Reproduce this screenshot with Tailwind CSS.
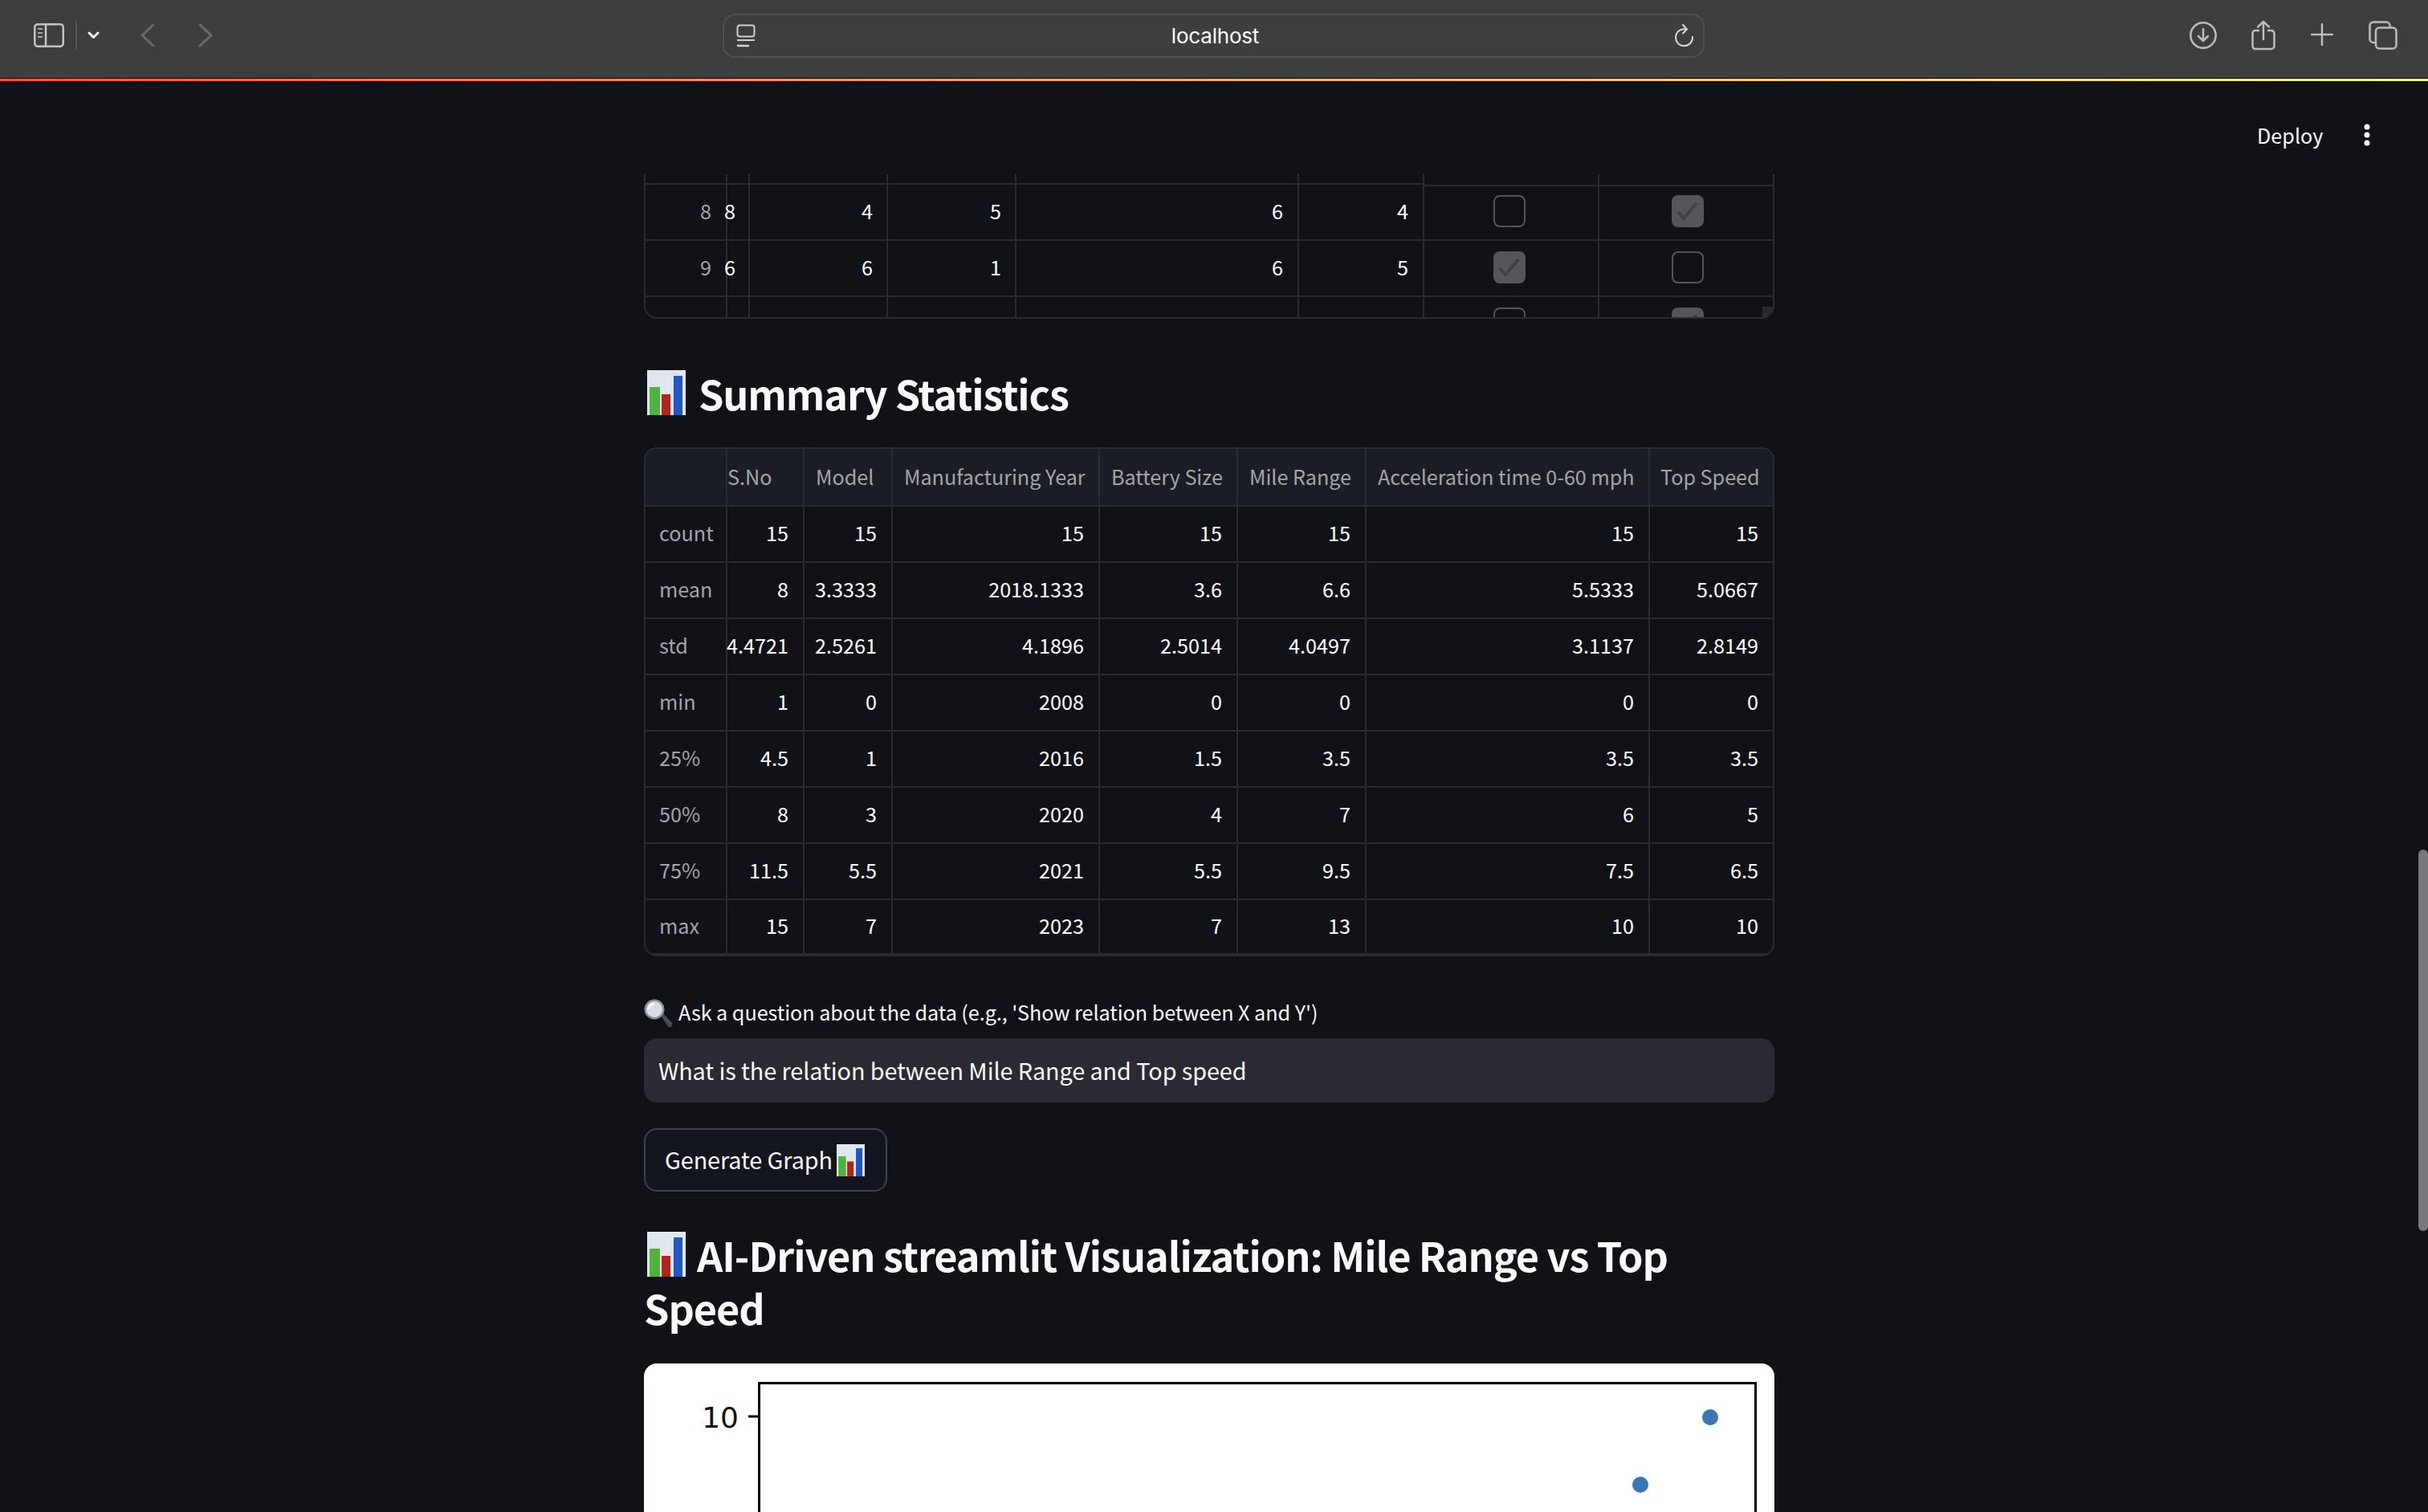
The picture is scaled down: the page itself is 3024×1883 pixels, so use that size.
<!DOCTYPE html>
<html lang="en">

<head>
    <meta charset="UTF-8" />
    <meta name="viewport" content="width=device-width, initial-scale=1.0" />
    <title>localhost</title>
    <script src="https://cdn.jsdelivr.net/npm/@tailwindcss/browser@4"></script>
</head>

<body class="relative h-[1883px] overflow-hidden bg-[#101218] text-[#fafafa] font-['Noto_Sans_CJK_SC','Noto_Sans',sans-serif]">
    <!-- browser toolbar -->
    <header class="relative h-[97px] bg-[#3e3e3e] flex items-center font-['Inter',sans-serif]">
        <div class="flex items-center pl-[42px] pb-[9px] h-full">
            <svg width="38" height="30" viewBox="0 0 38 30" fill="none" stroke="#c4c4c4" stroke-width="2.5">
                <rect x="1.2" y="1.2" width="35.6" height="27.6" rx="4" />
                <path d="M15 1v28" />
                <path d="M5 7h6M5 12h6M5 17h6" stroke-width="2" stroke="#a8a8a8" />
            </svg>
            <div class="w-[2px] h-[36px] bg-[#555555] ml-[14px]"></div>
            <svg class="ml-[13px]" width="15" height="10" viewBox="0 0 15 10" fill="none" stroke="#f0f0f0" stroke-width="3" stroke-linecap="round" stroke-linejoin="round">
                <path d="M2 2l5.5 5.5L13 2" />
            </svg>
            <svg class="ml-[51px]" width="18" height="30" viewBox="0 0 18 30" fill="none" stroke="#6a6a6a" stroke-width="3" stroke-linecap="round" stroke-linejoin="round">
                <path d="M16 2L2 15l14 13" />
            </svg>
            <svg class="ml-[54px]" width="18" height="30" viewBox="0 0 18 30" fill="none" stroke="#6a6a6a" stroke-width="3" stroke-linecap="round" stroke-linejoin="round">
                <path d="M2 2l14 13L2 28" />
            </svg>
        </div>

        <!-- address bar -->
        <div class="absolute left-[900px] top-[17px] w-[1223px] h-[55px] rounded-[16px] border-2 border-[#525252] flex items-center justify-between pl-[15px] pr-[11px]">
            <svg width="24" height="30" viewBox="0 0 24 30" fill="none" stroke="#d0d0d0" stroke-width="2">
                <rect x="1.5" y="1.5" width="21" height="14" rx="3" />
                <path d="M1 20h22" />
                <path d="M1 27h15" stroke-width="2.5" />
            </svg>
            <span class="text-[26px] leading-none text-white tracking-[-0.2px]">localhost</span>
            <svg width="24" height="30" viewBox="0 0 24 30" fill="none" stroke="#d8d8d8" stroke-width="2" stroke-linecap="round" stroke-linejoin="round">
                <path d="M14 6.5A10.5 10.5 0 1 0 22 16" />
                <path d="M10 1l5 5.500-5 5" />
            </svg>
        </div>

        <!-- right actions -->
        <div class="absolute left-[2727px] top-[25px] flex items-start">
            <svg width="34" height="38" viewBox="0 0 34 38" fill="none" stroke="#bdbdbd" stroke-width="2.500" stroke-linecap="round" stroke-linejoin="round">
                <circle cx="17" cy="19" r="15.700" />
                <path d="M17 11v15M11 20l6 6 6-6" />
            </svg>
            <svg class="ml-[43px]" width="30" height="38" viewBox="0 0 30 38" fill="none" stroke="#bdbdbd" stroke-width="2.500" stroke-linecap="round" stroke-linejoin="round">
                <path d="M9 13H5a3.500 3.500 0 0 0-3.500 3.500v16A3.500 3.500 0 0 0 5 36h20a3.500 3.500 0 0 0 3.500-3.500v-16A3.500 3.500 0 0 0 25 13h-4" />
                <path d="M15 24V2M8 8.500L15 2l7 6.500" />
            </svg>
            <svg class="ml-[44px] mt-[4px]" width="28" height="28" viewBox="0 0 28 28" fill="none" stroke="#bdbdbd" stroke-width="2.500" stroke-linecap="round">
                <path d="M14 1v26M1 14h26" />
            </svg>
            <svg class="ml-[44px] mt-[1px]" width="36" height="36" viewBox="0 0 36 36" fill="none" stroke="#bdbdbd" stroke-width="2.500" stroke-linejoin="round">
                <path d="M8 27H6a4.500 4.500 0 0 1-4.500-4.500V6A4.500 4.500 0 0 1 6 1.500h16A4.500 4.500 0 0 1 26.500 6v2" />
                <rect x="9" y="8.500" width="25.500" height="26" rx="4.500" />
            </svg>
        </div>
    </header>
    <div class="h-[1px] bg-black"></div>
    <div class="h-[3px] bg-gradient-to-r from-[#ff4b4b] to-[#fffd80]"></div>

    <!-- streamlit toolbar -->
    <div class="absolute left-[2811px] top-[148px] flex items-center">
        <span class="text-[25.2px] leading-[40px] text-[#fafafa]">Deploy</span>
        <svg class="ml-[51px]" width="8" height="30" viewBox="0 0 8 30" fill="#fafafa">
            <circle cx="4" cy="5" r="3.500" />
            <circle cx="4" cy="15" r="3.500" />
            <circle cx="4" cy="25" r="3.500" />
        </svg>
    </div>

    <main class="ml-[802px] w-[1408px] pt-[116px]">
        <!-- data editor, scrolled -->
        <div id="editor" class="relative h-[180px] w-[1408px] overflow-hidden rounded-b-[16px] border-x-2 border-b-2 border-[#2a2c32]"></div>

        <h3 class="mt-[64px] h-[56px] flex items-center text-[50.4px] leading-[56px] font-semibold tracking-[-1.1px]">
            <svg class="ml-[4px] mr-[16px] shrink-0" width="48" height="56" viewBox="0 0 48 56">
                <rect width="48" height="56" fill="#dfe6ee" />
                <rect x="3" y="21" width="13" height="35" fill="#4fb33c" />
                <rect x="18" y="30" width="11" height="26" fill="#b3241a" />
                <rect x="33" y="7" width="11" height="49" fill="#2257bf" />
            </svg>
            <span class="pt-[2px]">Summary Statistics</span>
        </h3>

        <!-- describe table -->
        <div id="summary" class="mt-[40px] w-[1408px] overflow-hidden rounded-[16px] border-2 border-[#2a2c32]"></div>

        <label class="mt-[52px] h-[38px] flex items-center text-[25.2px] leading-[38px] tracking-[-0.05px]">
            <svg class="shrink-0" width="36" height="36" viewBox="0 0 36 36">
                <path d="M21 21l3-3 11 12q1 3-1 4.500t-4-.5z" fill="#4a4a52" />
                <circle cx="13" cy="13" r="12.500" fill="#8a9096" />
                <circle cx="13" cy="13" r="10" fill="#d7dde2" />
                <path d="M6 13a7 7 0 0 1 7-7" stroke="#ffffff" stroke-width="2" fill="none" />
            </svg>
            <span class="ml-[7px] pb-[5px]">Ask a question about the data (e.g., 'Show relation between X and Y')</span>
        </label>

        <div class="mt-[12px] h-[80px] rounded-[16px] bg-[#292a32] flex items-center pl-[18px] text-[28.8px] tracking-[-0.08px]">What is the relation between Mile Range and Top speed</div>

        <button class="mt-[32px] h-[79px] w-[303px] rounded-[16px] border-2 border-[#41434a] bg-[#13161f] flex items-center justify-start pl-[24px] text-[28.8px] tracking-[-0.08px] whitespace-nowrap">
            <span class="pb-[2px]">Generate Graph</span>
            <svg class="ml-[5px] shrink-0" width="35" height="40" viewBox="0 0 48 56" preserveAspectRatio="none">
                <rect width="48" height="56" fill="#dfe6ee" />
                <rect x="3" y="21" width="13" height="35" fill="#4fb33c" />
                <rect x="18" y="30" width="11" height="26" fill="#b3241a" />
                <rect x="33" y="7" width="11" height="49" fill="#2257bf" />
            </svg>
        </button>

        <h3 class="mt-[46px] text-[50.4px] leading-[66px] font-semibold tracking-[-1.05px]">
            <svg class="inline-block ml-[4px] mr-[14px] align-[-6px]" width="48" height="56" viewBox="0 0 48 56">
                <rect width="48" height="56" fill="#dfe6ee" />
                <rect x="3" y="21" width="13" height="35" fill="#4fb33c" />
                <rect x="18" y="30" width="11" height="26" fill="#b3241a" />
                <rect x="33" y="7" width="11" height="49" fill="#2257bf" />
            </svg>AI-Driven streamlit Visualization: Mile Range vs Top Speed
        </h3>

        <!-- matplotlib figure, cut by the window -->
        <div class="mt-[36px] h-[400px] rounded-t-[16px] bg-white overflow-hidden">
            <svg width="1408" height="400" viewBox="0 0 1408 400">
                <rect x="143.500" y="24.500" width="1241" height="400" fill="none" stroke="#000000" stroke-width="3" />
                <path d="M130 66h13" stroke="#000000" stroke-width="3" />
                <text x="118" y="80" text-anchor="end" font-family="DejaVu Sans" font-size="36" fill="#111111">10</text>
                <circle cx="1328" cy="67" r="10" fill="#3a76b3" />
                <circle cx="1241" cy="151" r="10" fill="#3a76b3" />
            </svg>
        </div>
    </main>

    <!-- overlay scrollbar -->
    <div class="absolute left-[3012px] top-[1058px] w-[12px] h-[475px] rounded-full bg-[#78787b]"></div>

    <script>
        const box = 'flex shrink-0 items-center justify-end border-r-2 border-b-2 border-[#2a2c32] pb-[2px] text-[25.2px]';

        // data editor rows: index, s.no, two numbers, two numbers, two checkboxes
        const editorCols = [102, 28, 172, 160, 352, 156, 218, 218];
        const editorRows = [
            { h: 13, cells: ['', '', '', '', '', '', null, null] },
            { h: 70, cells: ['8', '8', '4', '5', '6', '4', false, true] },
            { h: 70, cells: ['9', '6', '6', '1', '6', '5', true, false] },
            { h: 70, cells: ['', '', '', '', '', '', false, true] },
        ];

        function checkbox(checked) {
            if (checked === null) return '';
            if (checked) {
                return `<svg width="40" height="40" viewBox="0 0 40 40"><rect width="40" height="40" rx="8" fill="#55565b"/><path d="M8 21l7 8 16-19" fill="none" stroke="#3f4045" stroke-width="4"/></svg>`;
            }
            return `<div class="w-[40px] h-[40px] rounded-[8px] border-2 border-[#55565b]"></div>`;
        }

        const editor = document.getElementById('editor');
        editorRows.forEach(row => {
            const el = document.createElement('div');
            el.className = 'flex';
            el.style.height = row.h + 'px';
            row.cells.forEach((val, i) => {
                const cell = document.createElement('div');
                cell.style.width = editorCols[i] + 'px';
                if (typeof val === 'string') {
                    const pad = i === 1 ? ' pr-[16px]' : (i === 2 || i === 3) ? ' pr-[17px]' : ' pr-[18px]';
                    cell.className = box + pad + (i === 0 ? ' text-[#a3a4a8]' : ' text-white');
                    cell.innerHTML = `<span class="shrink-0">${val}</span>`;
                } else {
                    const nudge = i === 6 ? ' pr-[4px]' : ' pl-[3px]';
                    cell.className = 'flex shrink-0 justify-center pt-[13px] border-r-2 border-b-2 border-[#2a2c32]' + nudge;
                    cell.innerHTML = checkbox(val);
                }
                el.appendChild(cell);
            });
            editor.appendChild(el);
        });
        editor.insertAdjacentHTML('beforeend', '<div class="absolute right-0 bottom-0 w-[13px] h-[13px] bg-[#2a2c32]"></div>');

        // df.describe() output
        const cols = [102, 96, 110, 258, 172, 160, 353, 153];
        const head = ['', 'S.No', 'Model', 'Manufacturing Year', 'Battery Size', 'Mile Range', 'Acceleration time 0-60 mph', 'Top Speed'];
        const rows = [
            ['count', '15', '15', '15', '15', '15', '15', '15'],
            ['mean', '8', '3.3333', '2018.1333', '3.6', '6.6', '5.5333', '5.0667'],
            ['std', '4.4721', '2.5261', '4.1896', '2.5014', '4.0497', '3.1137', '2.8149'],
            ['min', '1', '0', '2008', '0', '0', '0', '0'],
            ['25%', '4.5', '1', '2016', '1.5', '3.5', '3.5', '3.5'],
            ['50%', '8', '3', '2020', '4', '7', '6', '5'],
            ['75%', '11.5', '5.5', '2021', '5.5', '9.5', '7.5', '6.5'],
            ['max', '15', '7', '2023', '7', '13', '10', '10'],
        ];

        const summary = document.getElementById('summary');
        const headRow = document.createElement('div');
        headRow.className = 'flex h-[72px] bg-[#1b1d25]';
        head.forEach((val, i) => {
            const cell = document.createElement('div');
            cell.style.width = cols[i] + 'px';
            cell.className = 'flex shrink-0 items-center overflow-hidden whitespace-nowrap border-r-2 border-b-2 border-[#2a2c32] text-[25.2px] tracking-[-0.03px] text-[#a3a4a8] last:border-r-0 ' + (i === 1 ? 'pl-0' : i === 7 ? 'pl-[13px]' : 'pl-[14px]');
            cell.textContent = val;
            headRow.appendChild(cell);
        });
        summary.appendChild(headRow);

        rows.forEach((row, r) => {
            const last = r === rows.length - 1;
            const el = document.createElement('div');
            el.className = last ? 'flex h-[68px]' : 'flex h-[70px]';
            row.forEach((val, i) => {
                const cell = document.createElement('div');
                cell.style.width = cols[i] + 'px';
                if (i === 0) {
                    cell.className = 'flex shrink-0 items-center pl-[17px] pb-[2px] border-r-2 border-b-2 border-[#2a2c32] text-[25.2px] text-[#a3a4a8]';
                } else {
                    cell.className = box + ' pr-[18px] text-white last:border-r-0';
                }
                if (last) cell.classList.add('border-b-0', 'pb-0');
                cell.innerHTML = `<span class="shrink-0">${val}</span>`;
                el.appendChild(cell);
            });
            summary.appendChild(el);
        });
    </script>
</body>

</html>
